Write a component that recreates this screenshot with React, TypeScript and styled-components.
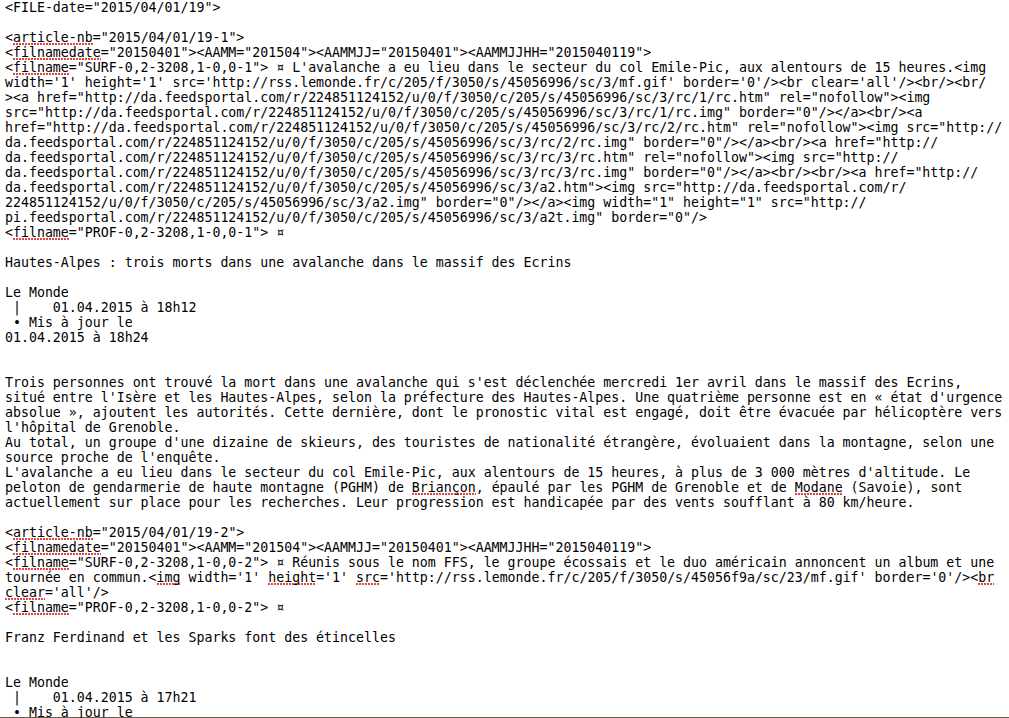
import React from "react";
import styled, { createGlobalStyle } from "styled-components";

const GlobalStyle = createGlobalStyle`
  html, body {
    margin: 0;
    padding: 0;
    background: #ffffff;
  }
  body {
    overflow: hidden;
  }
`;

const Window = styled.div`
  width: 1009px;
  height: 718px;
  overflow: hidden;
  background: #ffffff;
  box-shadow: inset 0 -1px 0 #6a5a4c;
  box-sizing: border-box;
`;

const Editor = styled.div`
  padding: 0 4px 0 5px;
  font-family: "DejaVu Sans Mono", "Liberation Mono", monospace;
  font-size: 13.25px;
  line-height: 15px;
  color: #000000;
`;

const Line = styled.div`
  height: 15px;
  white-space: pre;
`;

const Misspelled = styled.span`
  background-image: linear-gradient(90deg, #e4463f 2px, transparent 2px);
  background-size: 3px 2px;
  background-repeat: repeat-x;
  background-position: 0 100%;
`;

const LINES: string[] = [
  `<FILE-date="2015/04/01/19">`,
  ``,
  `<{article-nb}="2015/04/01/19-1">`,
  `<{filnamedate}="20150401"><AAMM="201504"><AAMMJJ="20150401"><AAMMJJHH="2015040119">`,
  `<{filname}="SURF-0,2-3208,1-0,0-1"> ¤ L'avalanche a eu lieu dans le secteur du col Emile-Pic, aux alentours de 15 heures.<img`,
  `width='1' height='1' src='http://rss.lemonde.fr/c/205/f/3050/s/45056996/sc/3/mf.gif' border='0'/><br clear='all'/><br/><br/`,
  `><a href="http://da.feedsportal.com/r/224851124152/u/0/f/3050/c/205/s/45056996/sc/3/rc/1/rc.htm" rel="nofollow"><img`,
  `src="http://da.feedsportal.com/r/224851124152/u/0/f/3050/c/205/s/45056996/sc/3/rc/1/rc.img" border="0"/></a><br/><a`,
  `href="http://da.feedsportal.com/r/224851124152/u/0/f/3050/c/205/s/45056996/sc/3/rc/2/rc.htm" rel="nofollow"><img src="http://`,
  `da.feedsportal.com/r/224851124152/u/0/f/3050/c/205/s/45056996/sc/3/rc/2/rc.img" border="0"/></a><br/><a href="http://`,
  `da.feedsportal.com/r/224851124152/u/0/f/3050/c/205/s/45056996/sc/3/rc/3/rc.htm" rel="nofollow"><img src="http://`,
  `da.feedsportal.com/r/224851124152/u/0/f/3050/c/205/s/45056996/sc/3/rc/3/rc.img" border="0"/></a><br/><br/><a href="http://`,
  `da.feedsportal.com/r/224851124152/u/0/f/3050/c/205/s/45056996/sc/3/a2.htm"><img src="http://da.feedsportal.com/r/`,
  `224851124152/u/0/f/3050/c/205/s/45056996/sc/3/a2.img" border="0"/></a><img width="1" height="1" src="http://`,
  `pi.feedsportal.com/r/224851124152/u/0/f/3050/c/205/s/45056996/sc/3/a2t.img" border="0"/>`,
  `<{filname}="PROF-0,2-3208,1-0,0-1"> ¤`,
  ``,
  `Hautes-Alpes : trois morts dans une avalanche dans le massif des Ecrins`,
  ``,
  `Le Monde`,
  ` |    01.04.2015 à 18h12`,
  ` • Mis à jour le`,
  `01.04.2015 à 18h24`,
  ``,
  ``,
  `Trois personnes ont trouvé la mort dans une avalanche qui s'est déclenchée mercredi 1er avril dans le massif des Ecrins,`,
  `situé entre l'Isère et les Hautes-Alpes, selon la préfecture des Hautes-Alpes. Une quatrième personne est en « état d'urgence`,
  `absolue », ajoutent les autorités. Cette dernière, dont le pronostic vital est engagé, doit être évacuée par hélicoptère vers`,
  `l'hôpital de Grenoble.`,
  `Au total, un groupe d'une dizaine de skieurs, des touristes de nationalité étrangère, évoluaient dans la montagne, selon une`,
  `source proche de l'enquête.`,
  `L'avalanche a eu lieu dans le secteur du col Emile-Pic, aux alentours de 15 heures, à plus de 3 000 mètres d'altitude. Le`,
  `peloton de gendarmerie de haute montagne (PGHM) de {Briançon}, épaulé par les PGHM de Grenoble et de {Modane} (Savoie), sont`,
  `actuellement sur place pour les recherches. Leur progression est handicapée par des vents soufflant à 80 km/heure.`,
  ``,
  `<{article-nb}="2015/04/01/19-2">`,
  `<{filnamedate}="20150401"><AAMM="201504"><AAMMJJ="20150401"><AAMMJJHH="2015040119">`,
  `<{filname}="SURF-0,2-3208,1-0,0-2"> ¤ Réunis sous le nom FFS, le groupe écossais et le duo américain annoncent un album et une`,
  `tournée en commun.<{img} width='1' {height}='1' {src}='http://rss.lemonde.fr/c/205/f/3050/s/45056f9a/sc/23/mf.gif' border='0'/><{br}`,
  `{clear}='all'/>`,
  `<{filname}="PROF-0,2-3208,1-0,0-2"> ¤`,
  ``,
  `Franz Ferdinand et les Sparks font des étincelles`,
  ``,
  ``,
  `Le Monde`,
  ` |    01.04.2015 à 17h21`,
  ` • Mis à jour le`,
];

function renderLine(text: string) {
  const parts = text.split(/(\{[^}]*\})/g);
  return parts.map((part, i) => {
    if (part.startsWith("{") && part.endsWith("}")) {
      return <Misspelled key={i}>{part.slice(1, -1)}</Misspelled>;
    }
    return <React.Fragment key={i}>{part}</React.Fragment>;
  });
}

export default function App() {
  return (
    <>
      <GlobalStyle />
      <Window>
        <Editor>
          {LINES.map((line, i) => (
            <Line key={i}>{line.length ? renderLine(line) : "\u00a0"}</Line>
          ))}
        </Editor>
      </Window>
    </>
  );
}
